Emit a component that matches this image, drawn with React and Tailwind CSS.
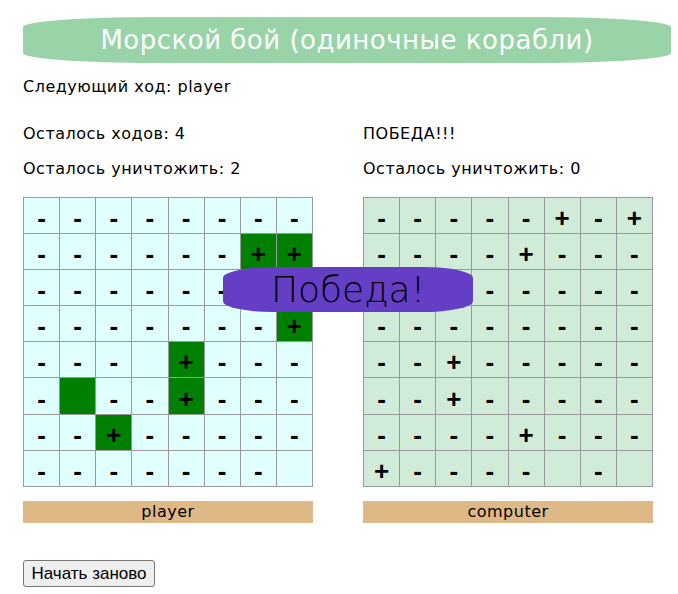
import React from "react";

const LEFT = [
  ["-", "-", "-", "-", "-", "-", "-", "-"],
  ["-", "-", "-", "-", "-", "-", "G+", "G+"],
  ["-", "-", "-", "-", "-", "-", "-", "-"],
  ["-", "-", "-", "-", "-", "-", "-", "G+"],
  ["-", "-", "-", "", "G+", "-", "-", "-"],
  ["-", "G", "-", "-", "G+", "-", "-", "-"],
  ["-", "-", "G+", "-", "-", "-", "-", "-"],
  ["-", "-", "-", "-", "-", "-", "-", ""],
];

const RIGHT = [
  ["-", "-", "-", "-", "-", "+", "-", "+"],
  ["-", "-", "-", "-", "+", "-", "-", "-"],
  ["-", "-", "-", "-", "-", "-", "-", "-"],
  ["-", "-", "-", "-", "-", "-", "-", "-"],
  ["-", "-", "+", "-", "-", "-", "-", "-"],
  ["-", "-", "+", "-", "-", "-", "-", "-"],
  ["-", "-", "-", "-", "+", "-", "-", "-"],
  ["+", "-", "-", "-", "-", "", "-", ""],
];

function Board({ data, bg }) {
  return (
    <div className="grid grid-cols-8 w-[290px] border-l border-t border-[#999999]">
      {data.flat().map((c, i) => {
        const green = c.startsWith("G");
        const sym = c.replace("G", "");
        return (
          <div
            key={i}
            className={
              "h-[36.1px] border-r border-b border-[#999999] flex items-center justify-center pt-[6px] font-['Liberation_Sans',Arial,sans-serif] font-bold text-[26px] text-black " +
              (green ? "bg-[#008000]" : bg)
            }
          >
            {sym}
          </div>
        );
      })}
    </div>
  );
}

export default function App() {
  return (
    <div className="relative w-[678px] h-[594px] bg-white text-black font-['DejaVu_Sans',sans-serif] overflow-hidden">
      <div className="pl-[23px] pr-[7px] pt-[17px]">
        <div className="h-[46px] rounded-[130px/10px] bg-[#98d4a8] text-white text-[26px] tracking-[0.5px] flex items-center justify-center">
          Морской бой (одиночные корабли)
        </div>
        <div className="mt-[12px] text-[16px] leading-[24px] tracking-[0.5px]">Следующий ход: player</div>
        <div className="flex gap-[50px] mt-[23px] tracking-[0.5px]">
          <div className="w-[290px] flex flex-col">
            <div className="text-[16px] leading-[24px]">Осталось ходов: 4</div>
            <div className="text-[16px] leading-[24px] mt-[11px]">Осталось уничтожить: 2</div>
            <div className="mt-[16px] tracking-normal">
              <Board data={LEFT} bg="bg-[#e0ffff]" />
            </div>
            <div className="mt-[14px] h-[22px] bg-[#deb887] text-[16px] leading-[22px] text-center">player</div>
          </div>
          <div className="w-[290px] flex flex-col">
            <div className="text-[16px] leading-[24px]">ПОБЕДА!!!</div>
            <div className="text-[16px] leading-[24px] mt-[11px]">Осталось уничтожить: 0</div>
            <div className="mt-[16px] tracking-normal">
              <Board data={RIGHT} bg="bg-[#d0ecd8]" />
            </div>
            <div className="mt-[14px] h-[22px] bg-[#deb887] text-[16px] leading-[22px] text-center">computer</div>
          </div>
        </div>
        <button className="mt-[37px] h-[27px] w-[132px] border border-[#767676] rounded-[3px] bg-[#efefef] text-[17px] leading-[19px] font-['Liberation_Sans',Arial,sans-serif] text-black">
          Начать заново
        </button>
      </div>
      <div className="absolute left-[223px] top-[267px] w-[250px] h-[45px] rounded-[50px/11px] bg-[#653ec6] flex items-center justify-center text-[36px] font-light text-black">
        Победа!
      </div>
    </div>
  );
}
